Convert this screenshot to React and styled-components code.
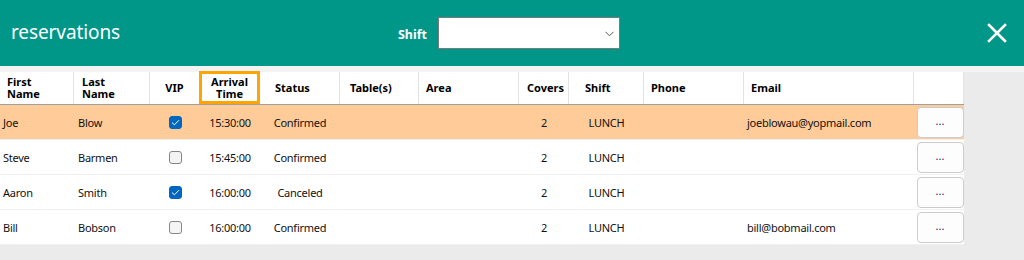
import React, { useState } from "react";
import styled, { createGlobalStyle } from "styled-components";

const GlobalStyle = createGlobalStyle`
  html, body {
    margin: 0;
    padding: 0;
    background: #ebebeb;
    font-family: "Noto Sans", "Open Sans", sans-serif;
  }
`;

const columns = [
  { key: "first", label: "First Name", width: 74, headPad: 7, align: "left", pad: 3 },
  { key: "last", label: "Last Name", width: 76, headPad: 8, align: "left", pad: 4 },
  { key: "vip", label: "VIP", width: 50, headPad: 0, headAlign: "center", align: "center" },
  { key: "time", label: "Arrival Time", width: 60, headAlign: "center", align: "center" },
  { key: "status", label: "Status", width: 80, headPad: 15, align: "center" },
  { key: "tables", label: "Table(s)", width: 79, headPad: 10, align: "left", pad: 4 },
  { key: "area", label: "Area", width: 100, headPad: 7, align: "left", pad: 4 },
  { key: "covers", label: "Covers", width: 50, headPad: 8, align: "center" },
  { key: "shift", label: "Shift", width: 75, headPad: 16, align: "center" },
  { key: "phone", label: "Phone", width: 100, headPad: 7, align: "left", pad: 4 },
  { key: "email", label: "Email", width: 170, headPad: 7, align: "left", pad: 3 },
  { key: "action", label: "", width: 50, align: "center" },
];

const rows = [
  { first: "Joe", last: "Blow", vip: true, time: "15:30:00", status: "Confirmed", covers: "2", shift: "LUNCH", email: "joeblowau@yopmail.com" },
  { first: "Steve", last: "Barmen", vip: false, time: "15:45:00", status: "Confirmed", covers: "2", shift: "LUNCH", email: "" },
  { first: "Aaron", last: "Smith", vip: true, time: "16:00:00", status: "Canceled", covers: "2", shift: "LUNCH", email: "" },
  { first: "Bill", last: "Bobson", vip: false, time: "16:00:00", status: "Confirmed", covers: "2", shift: "LUNCH", email: "bill@bobmail.com" },
];

const template = columns.map((c) => `${c.width}px`).join(" ");

export default function App() {
  const [selected, setSelected] = useState(0);

  return (
    <Page>
      <GlobalStyle />
      <TopBar>
        <Title>reservations</Title>
        <ShiftFilter>
          <ShiftLabel>Shift</ShiftLabel>
          <SelectBox>
            <svg width="9" height="6" viewBox="0 0 9 6">
              <path d="M0.5 0.8 L4.5 4.8 L8.5 0.8" fill="none" stroke="#555" strokeWidth="1" />
            </svg>
          </SelectBox>
        </ShiftFilter>
        <CloseButton aria-label="close">
          <svg width="20" height="20" viewBox="0 0 20 20">
            <path d="M2 2 L18 18 M18 2 L2 18" stroke="#fff" strokeWidth="2.6" strokeLinecap="square" />
          </svg>
        </CloseButton>
      </TopBar>
      <Strip />
      <Grid>
        <HeadRow>
          {columns.map((c) => (
            <HeadCell
              key={c.key}
              $pad={c.headPad || 0}
              $align={c.headAlign || "left"}
              $focused={c.key === "time"}
            >
              {c.label}
            </HeadCell>
          ))}
        </HeadRow>
        {rows.map((r, i) => (
          <Row key={r.first} $selected={selected === i} onClick={() => setSelected(i)}>
            {columns.map((c) => {
              if (c.key === "vip") {
                return (
                  <Cell key={c.key} $align="center">
                    <Check $checked={r.vip}>
                      {r.vip && (
                        <svg width="9" height="7" viewBox="0 0 9 7">
                          <path d="M1 3.6 L3.4 5.8 L8 1.2" fill="none" stroke="#fff" strokeWidth="1" />
                        </svg>
                      )}
                    </Check>
                  </Cell>
                );
              }
              if (c.key === "action") {
                return (
                  <Cell key={c.key} $align="center">
                    <DotsButton>...</DotsButton>
                  </Cell>
                );
              }
              return (
                <Cell key={c.key} $align={c.align} $pad={c.pad || 0}>
                  {r[c.key] || ""}
                </Cell>
              );
            })}
          </Row>
        ))}
      </Grid>
    </Page>
  );
}

const Page = styled.div`
  width: 1024px;
  height: 260px;
  background: #ebebeb;
`;

const TopBar = styled.header`
  height: 66px;
  background: #009688;
  display: grid;
  grid-template-columns: 1fr auto 1fr;
  align-items: center;
  padding: 0 17px 0 11px;
  box-sizing: border-box;
`;

const Title = styled.h1`
  margin: 0;
  color: #fff;
  font-weight: 400;
  font-size: 19px;
  letter-spacing: -0.1px;
  padding-bottom: 2px;
`;

const ShiftFilter = styled.div`
  display: flex;
  align-items: center;
  gap: 11px;
`;

const ShiftLabel = styled.span`
  color: #fff;
  font-weight: 700;
  font-size: 12.5px;
  padding-top: 3px;
`;

const SelectBox = styled.div`
  width: 182px;
  height: 32px;
  box-sizing: border-box;
  background: #fff;
  border: 1px solid #7a7a7a;
  display: flex;
  align-items: center;
  justify-content: flex-end;
  padding-right: 5px;
  svg {
    margin-top: 2px;
  }
`;

const CloseButton = styled.button`
  justify-self: end;
  background: transparent;
  border: none;
  padding: 0;
  display: flex;
  cursor: pointer;
`;

const Strip = styled.div`
  height: 6px;
  background: #f3f3f3;
`;

const Grid = styled.div`
  width: 964px;
  background: #fff;
  font-size: 11px;
  letter-spacing: -0.25px;
  color: #111;
`;

const HeadRow = styled.div`
  display: grid;
  grid-template-columns: ${template};
  height: 33px;
  border-bottom: 1px solid #a0a0a0;
  box-sizing: border-box;
  letter-spacing: 0;
`;

const HeadCell = styled.div`
  box-sizing: border-box;
  display: flex;
  align-items: center;
  justify-content: ${(p) => (p.$align === "center" ? "center" : "flex-start")};
  text-align: ${(p) => p.$align};
  padding-left: ${(p) => p.$pad}px;
  border-right: 1px solid #e3e3e3;
  font-weight: 700;
  font-size: 11px;
  line-height: 12px;
  color: #000;
  ${(p) =>
    p.$focused &&
    `
    border: 3px solid #ffa500;
    margin: -1px 0 0 -1px;
    padding-top: 1px;
  `}
  &:nth-child(1), &:nth-child(2) {
    padding-right: 20px;
  }
`;

const Row = styled.div`
  display: grid;
  grid-template-columns: ${template};
  height: 35px;
  box-sizing: border-box;
  background: ${(p) => (p.$selected ? "#ffcc99" : "#fff")};
  border-bottom: 1px solid #f0f0f0;
`;

const Cell = styled.div`
  display: flex;
  align-items: center;
  justify-content: ${(p) => (p.$align === "center" ? "center" : "flex-start")};
  padding-left: ${(p) => p.$pad || 0}px;
  white-space: nowrap;
`;

const Check = styled.span`
  width: 13px;
  height: 13px;
  box-sizing: border-box;
  border-radius: 3px;
  display: flex;
  align-items: center;
  justify-content: center;
  background: ${(p) => (p.$checked ? "#0067c0" : "#f4f4f4")};
  border: 1px solid ${(p) => (p.$checked ? "#0067c0" : "#858585")};
`;

const DotsButton = styled.button`
  width: 47px;
  height: 31px;
  box-sizing: border-box;
  border: 1px solid #cccccc;
  border-radius: 4px;
  background: #fdfdfd;
  font-family: inherit;
  font-size: 11px;
  color: #3a1a5a;
  padding: 0 0 4px;
  margin-left: 2px;
  cursor: pointer;
`;
